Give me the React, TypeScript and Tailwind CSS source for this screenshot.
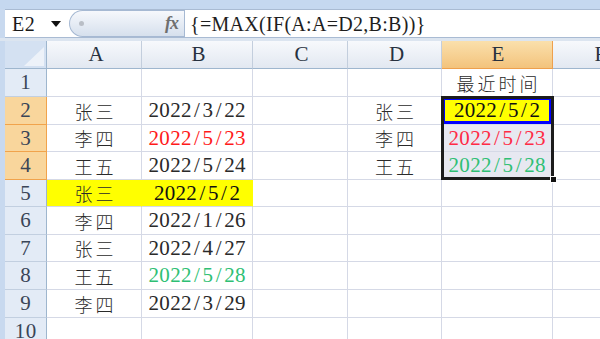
import type { ReactNode } from 'react';
import clsx from 'clsx';

const SERIF = 'font-[family-name:Liberation_Serif,serif]';
const CJK = 'font-[family-name:Noto_Sans_CJK_SC,sans-serif]';

/**
 * Excel here uses SimSun, whose latin glyphs are serif and fixed-width.
 * Nothing like that is installed, so each char gets its own fixed cell.
 */
function Num({ text, className }: { text: string; className?: string }) {
  return (
    <span className={clsx('inline-flex text-[21px] leading-none', SERIF, className)}>
      {text.split('').map((ch, i) => (
        <span key={i} className="inline-block w-[10.8px] text-center">
          {ch}
        </span>
      ))}
    </span>
  );
}

function Name({ children }: { children: ReactNode }) {
  return (
    <span className={clsx('text-[18px] leading-none tracking-[3px] pl-[3px] font-light text-[#2a2a2a]', CJK)}>
      {children}
    </span>
  );
}

function Cell({ children, className }: { children?: ReactNode; className?: string }) {
  return (
    <div
      className={clsx(
        'flex items-center justify-center border-r border-b border-[#d5d9e6] overflow-hidden',
        className,
      )}
    >
      {children}
    </div>
  );
}

function ColHead({ label, active }: { label: string; active?: boolean }) {
  return (
    <div
      className={clsx(
        'flex items-center justify-center border-r border-b',
        active
          ? 'bg-gradient-to-b from-[#fae0ac] to-[#f3c37c] border-[#eea04d]'
          : 'bg-gradient-to-b from-[#f7f9fc] to-[#e2e8f1] border-r-[#c3cedd] border-b-[#9eb6ce]',
      )}
    >
      <Num text={label} className="text-[#27313f]" />
    </div>
  );
}

function RowHead({ n, active }: { n: number; active?: boolean }) {
  return (
    <div
      className={clsx(
        'flex items-center justify-center border-r border-b',
        active
          ? 'bg-[#f9d69c] border-b-[#f1a34b] border-r-[#f1a34b]'
          : 'bg-[#e3ebf6] border-r-[#9eb6ce] border-b-[#c2cfe0]',
      )}
    >
      <Num text={String(n)} className="text-[#3a4557]" />
    </div>
  );
}

type Row = {
  a?: string;
  b?: string;
  bColor?: string;
  d?: string;
  e?: ReactNode;
  eClass?: string;
  yellow?: boolean;
  active?: boolean;
};

const ROWS: Row[] = [
  { e: <Name>最近时间</Name> },
  {
    a: '张三',
    b: '2022/3/22',
    d: '张三',
    e: <Num text="2022/5/2" className="text-[#111]" />,
    eClass: 'bg-[#ffff00] shadow-[inset_0_0_0_3px_#0000ff]',
    active: true,
  },
  {
    a: '李四',
    b: '2022/5/23',
    bColor: 'text-[#ff1a1a]',
    d: '李四',
    e: <Num text="2022/5/23" className="text-[#ff2b45]" />,
    eClass: 'bg-[#e7e8f1]',
    active: true,
  },
  {
    a: '王五',
    b: '2022/5/24',
    d: '王五',
    e: <Num text="2022/5/28" className="text-[#2fbf74]" />,
    eClass: 'bg-[#e7e8f1]',
    active: true,
  },
  { a: '张三', b: '2022/5/2', yellow: true },
  { a: '李四', b: '2022/1/26' },
  { a: '张三', b: '2022/4/27' },
  { a: '王五', b: '2022/5/28', bColor: 'text-[#2fbf74]' },
  { a: '李四', b: '2022/3/29' },
  {},
];

export default function App() {
  return (
    <div className="w-[600px] h-[339px] overflow-hidden bg-[#c8d9ef] flex flex-col">
      {/* ribbon edge */}
      <div className="h-[9px] shrink-0 bg-[#c5d8f0]" />

      {/* formula bar */}
      <div className="h-[29px] shrink-0 ml-[5px] flex border-y border-[#a9bbd3] bg-white">
        <div className="w-[64px] flex items-center pl-[7px]">
          <span className={clsx('text-[20px] leading-none tracking-[0.5px] text-[#1a1a1a]', SERIF)}>E2</span>
          <svg width="10" height="6" viewBox="0 0 10 6" className="ml-[16px]">
            <polygon points="0,0 10,0 5,6" fill="#111" />
          </svg>
        </div>
        <div className="w-[115px] flex items-center justify-between rounded-l-full border border-r-0 border-[#a6b9d3] bg-gradient-to-b from-[#f6f8fc] to-[#d6e0ed] pl-[9px] pr-[6px]">
          <span className="w-[5px] h-[5px] rounded-full bg-[#b9bec6]" />
          <span className={clsx('italic font-bold text-[18px] text-[#6f6f6f] tracking-[-1px]', SERIF)}>fx</span>
        </div>
        <div className="flex-1 flex items-center pl-[5px] border-l border-[#a6b9d3]">
          <span className={clsx('text-[20px] leading-none tracking-[0.3px] text-[#1e1e1e]', SERIF)}>
            {'{=MAX(IF(A:A=D2,B:B))}'}
          </span>
        </div>
      </div>

      <div className="h-[3px] shrink-0 bg-[#dce5f0]" />

      {/* sheet */}
      <div className="flex-1 ml-[5px] bg-white relative overflow-hidden">
        <div className="grid grid-cols-[42px_95px_111px_95px_94px_111px_95px] grid-rows-[28px_28px_28px_27px_28px_27px_28px_27px_28px_28px_28px] w-[643px]">
          {/* header row */}
          <div className="relative bg-[#d4e1f2] border-r border-b border-[#9eb6ce]">
            <svg width="20" height="19" viewBox="0 0 20 19" className="absolute right-[2px] bottom-[2px]">
              <polygon points="20,0 20,19 0,19" fill="#edf2f9" />
            </svg>
          </div>
          <ColHead label="A" />
          <ColHead label="B" />
          <ColHead label="C" />
          <ColHead label="D" />
          <ColHead label="E" active />
          <ColHead label="F" />

          {ROWS.map((r, i) => (
            <div key={i} className="contents">
              <RowHead n={i + 1} active={r.active} />
              <Cell className={r.yellow ? 'bg-[#ffff00] border-r-[#ffff00]' : ''}>
                {r.a && <Name>{r.a}</Name>}
              </Cell>
              <Cell className={r.yellow ? 'bg-[#ffff00] border-r-[#ffff00]' : ''}>
                {r.b && (
                  <Num text={r.b} className={r.bColor ?? (r.yellow ? 'text-[#111]' : 'text-[#2a2a2a]')} />
                )}
              </Cell>
              <Cell />
              <Cell>{r.d && <Name>{r.d}</Name>}</Cell>
              <Cell className={r.eClass}>{r.e}</Cell>
              <Cell />
            </div>
          ))}
        </div>

        {/* selection box E2:E4 */}
        <div className="absolute left-[436px] top-[55px] w-[113px] h-[84px] border-[3px] border-[#1c1c1c] pointer-events-none" />
        <div className="absolute left-[545px] top-[135px] w-[7px] h-[7px] bg-[#111] border border-white" />
      </div>
    </div>
  );
}
